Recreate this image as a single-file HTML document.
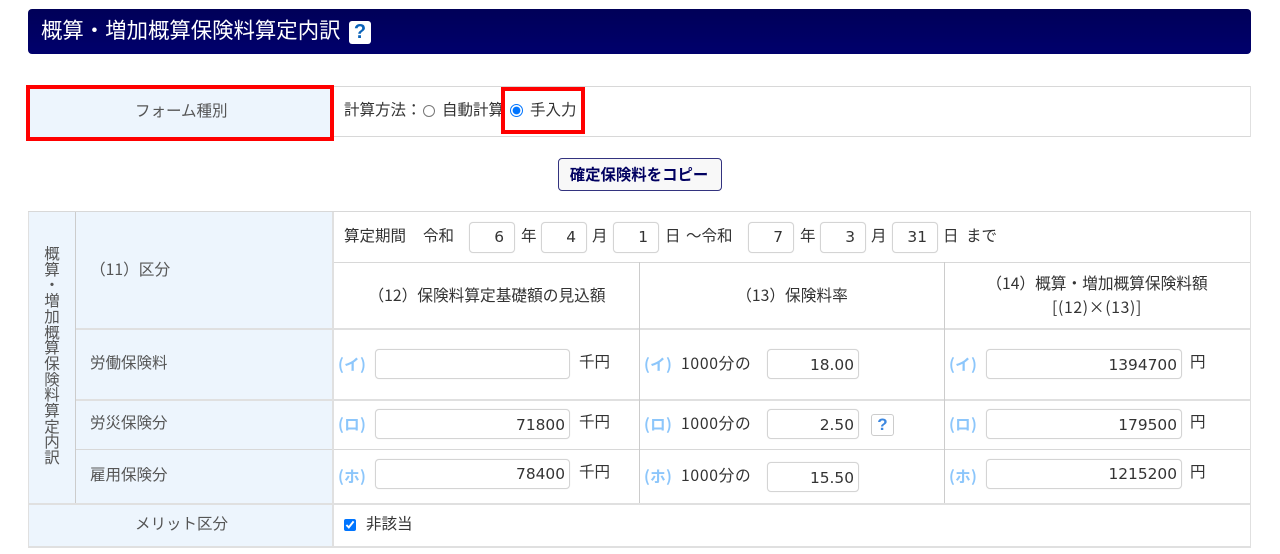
<!DOCTYPE html>
<html lang="ja"><head><meta charset="utf-8"><title>概算・増加概算保険料算定内訳</title>
<style>
html,body{margin:0;padding:0;background:#fff;width:1280px;height:554px;overflow:hidden}
body{position:relative;font-family:"Liberation Sans","Noto Sans CJK JP",sans-serif;font-size:15.5px;color:#333}
.t{position:absolute;white-space:nowrap;line-height:20px;height:20px;margin-top:1px}
.n{font-family:"Noto Sans CJK JP",sans-serif;font-size:15.7px}
.w{letter-spacing:.7px}
.c{transform:translateX(-50%)}
.g{color:#555}
.k{color:#8cc6fb;font-weight:700;font-size:15.5px;font-family:"Noto Sans CJK JP",sans-serif;letter-spacing:.3px}
.b{position:absolute;background:#edf5fd}
.h{position:absolute;height:2px;background:#e0e0e0}
.l{height:1px;background:#d8d8d8}
.v{position:absolute;width:2px;background:#e0e0e0}
.i{position:absolute;box-sizing:border-box;border:1px solid #d4d4d4;border-radius:4px;background:#fff;text-align:right;padding-right:4px;font-family:"DejaVu Sans",sans-serif;font-size:15.4px;color:#333;box-shadow:0 0 1px #e4e4e4}
.r{position:absolute;box-sizing:border-box;border:4px solid #f00}
.q{position:absolute;box-sizing:border-box;border-radius:3px;background:#fff;text-align:center;font-family:"Liberation Sans",sans-serif;font-weight:700;color:#2a7fd8}
input{position:absolute;margin:0}
</style></head><body>
<div style="position:absolute;left:28px;top:9px;width:1223px;height:45px;border-radius:4px;background:linear-gradient(#000058,#00006c)"></div>
<div class="t" style="left:41px;top:19px;font-size:21.4px;color:#fff;line-height:22px;height:22px">概算・増加概算保険料算定内訳</div>
<div class="q" style="left:349px;top:21px;width:22px;height:23px;font-size:20px;line-height:23px;color:#0a63b8">?</div>

<div class="b" style="left:28px;top:87px;width:305px;height:50px"></div>
<div class="h l" style="left:333px;top:86px;width:918px"></div>
<div class="h l" style="left:333px;top:136px;width:918px"></div>
<div class="v l" style="left:1250px;top:86px;height:51px;width:1px"></div>
<div class="t g" style="left:135px;top:101px">フォーム種別</div>
<div class="t" style="left:344px;top:100px">計算方法：</div>
<div style="position:absolute;left:423px;top:105px;width:12px;height:12px;box-sizing:border-box;border:1px solid #777;border-radius:50%;background:#fff"></div>
<div class="t" style="left:442px;top:100px">自動計算</div>
<input type="radio" checked style="left:510px;top:104px;width:13px;height:13px">
<div class="t" style="left:530px;top:100px">手入力</div>
<div class="r" style="left:26px;top:85px;width:308px;height:56px"></div>
<div class="r" style="left:501px;top:87px;width:84px;height:47px"></div>

<div style="position:absolute;left:558px;top:158px;width:164px;height:33px;box-sizing:border-box;border:1.5px solid #33337f;border-radius:4px;background:#f8f8f8;text-align:center;font-weight:700;color:#000060;font-size:15.4px;line-height:33px;padding-right:2px">確定保険料をコピー</div>

<div class="b" style="left:28px;top:212px;width:305px;height:335px"></div>
<div class="h l" style="left:28px;top:211px;width:1223px"></div>
<div class="h l" style="left:333px;top:262px;width:918px"></div>
<div class="h" style="left:75px;top:328px;width:1176px"></div>
<div class="h" style="left:75px;top:399px;width:1176px"></div>
<div class="h l" style="left:75px;top:449px;width:1176px"></div>
<div class="h" style="left:28px;top:503px;width:1223px"></div>
<div class="h" style="left:28px;top:546px;width:1223px"></div>
<div class="v l" style="left:28px;top:212px;height:335px;width:1px"></div>
<div class="v l" style="left:75px;top:212px;height:291px;width:1px;background:#ccc"></div>
<div class="v" style="left:332px;top:212px;height:335px"></div>
<div class="v l" style="left:639px;top:262px;height:241px;width:1px;background:#ccc"></div>
<div class="v l" style="left:944px;top:262px;height:241px;width:1px;background:#ccc"></div>
<div class="v l" style="left:1250px;top:212px;height:335px;width:1px"></div>

<div class="g" style="position:absolute;left:42px;top:247px;width:20px;text-align:center;line-height:15.7px;font-size:15.5px">概<br>算<br>・<br>増<br>加<br>概<br>算<br>保<br>険<br>料<br>算<br>定<br>内<br>訳</div>
<div class="t g n" style="left:90px;top:258px">（11）区分</div>
<div class="t g" style="left:90px;top:353px">労働保険料</div>
<div class="t g" style="left:90px;top:413px">労災保険分</div>
<div class="t g" style="left:90px;top:465px">雇用保険分</div>
<div class="t g" style="left:135px;top:514px">メリット区分</div>

<div class="t" style="left:344px;top:226px">算定期間</div>
<div class="t" style="left:423px;top:226px">令和</div>
<div class="i" style="left:469px;top:222px;width:46px;height:31px;line-height:29px;padding-right:10px">6</div>
<div class="t" style="left:521px;top:226px">年</div>
<div class="i" style="left:541px;top:222px;width:46px;height:31px;line-height:29px;padding-right:10px">4</div>
<div class="t" style="left:592px;top:226px">月</div>
<div class="i" style="left:613px;top:222px;width:46px;height:31px;line-height:29px;padding-right:10px">1</div>
<div class="t" style="left:665px;top:226px">日</div>
<div class="t" style="left:686px;top:226px">～令和</div>
<div class="i" style="left:748px;top:222px;width:46px;height:31px;line-height:29px;padding-right:10px">7</div>
<div class="t" style="left:800px;top:226px">年</div>
<div class="i" style="left:820px;top:222px;width:46px;height:31px;line-height:29px;padding-right:10px">3</div>
<div class="t" style="left:871px;top:226px">月</div>
<div class="i" style="left:892px;top:222px;width:46px;height:31px;line-height:29px;padding-right:10px">31</div>
<div class="t" style="left:943px;top:226px">日</div>
<div class="t" style="left:966px;top:226px">まで</div>

<div class="t c n" style="left:487px;top:284px">（12）保険料算定基礎額の見込額</div>
<div class="t c n" style="left:792px;top:284px">（13）保険料率</div>
<div class="t c n" style="left:1097px;top:272px">（14）概算・増加概算保険料額</div>
<div class="t c n w" style="left:1097px;top:296px">[(12)×(13)]</div>

<div class="t k" style="left:338px;top:353px">(イ)</div>
<div class="i" style="left:375px;top:349px;width:195px;height:30px;line-height:28px"></div>
<div class="t" style="left:579px;top:352px">千円</div>
<div class="t k" style="left:644px;top:353px">(イ)</div>
<div class="t n w" style="left:681px;top:352px">1000分の</div>
<div class="i" style="left:767px;top:349px;width:92px;height:30px;line-height:30px">18.00</div>
<div class="t k" style="left:949px;top:353px">(イ)</div>
<div class="i" style="left:986px;top:349px;width:196px;height:30px;line-height:30px">1394700</div>
<div class="t" style="left:1190px;top:352px">円</div>

<div class="t k" style="left:338px;top:413px">(ロ)</div>
<div class="i" style="left:375px;top:409px;width:195px;height:30px;line-height:30px">71800</div>
<div class="t" style="left:579px;top:412px">千円</div>
<div class="t k" style="left:644px;top:413px">(ロ)</div>
<div class="t n w" style="left:681px;top:412px">1000分の</div>
<div class="i" style="left:767px;top:409px;width:92px;height:30px;line-height:30px">2.50</div>
<div class="q" style="left:871px;top:414px;width:23px;height:22px;border:1px solid #ccc;font-size:17px;line-height:20px;color:#3c87e0">?</div>
<div class="t k" style="left:949px;top:413px">(ロ)</div>
<div class="i" style="left:986px;top:409px;width:196px;height:30px;line-height:30px">179500</div>
<div class="t" style="left:1190px;top:412px">円</div>

<div class="t k" style="left:338px;top:465px">(ホ)</div>
<div class="i" style="left:375px;top:459px;width:195px;height:30px;line-height:28px">78400</div>
<div class="t" style="left:579px;top:462px">千円</div>
<div class="t k" style="left:644px;top:465px">(ホ)</div>
<div class="t n w" style="left:681px;top:464px">1000分の</div>
<div class="i" style="left:767px;top:462px;width:92px;height:30px;line-height:30px">15.50</div>
<div class="t k" style="left:949px;top:465px">(ホ)</div>
<div class="i" style="left:986px;top:459px;width:196px;height:30px;line-height:28px">1215200</div>
<div class="t" style="left:1190px;top:462px">円</div>

<input type="checkbox" checked style="left:344px;top:519px;width:12px;height:12px">
<div class="t" style="left:366px;top:514px">非該当</div>
</body></html>
